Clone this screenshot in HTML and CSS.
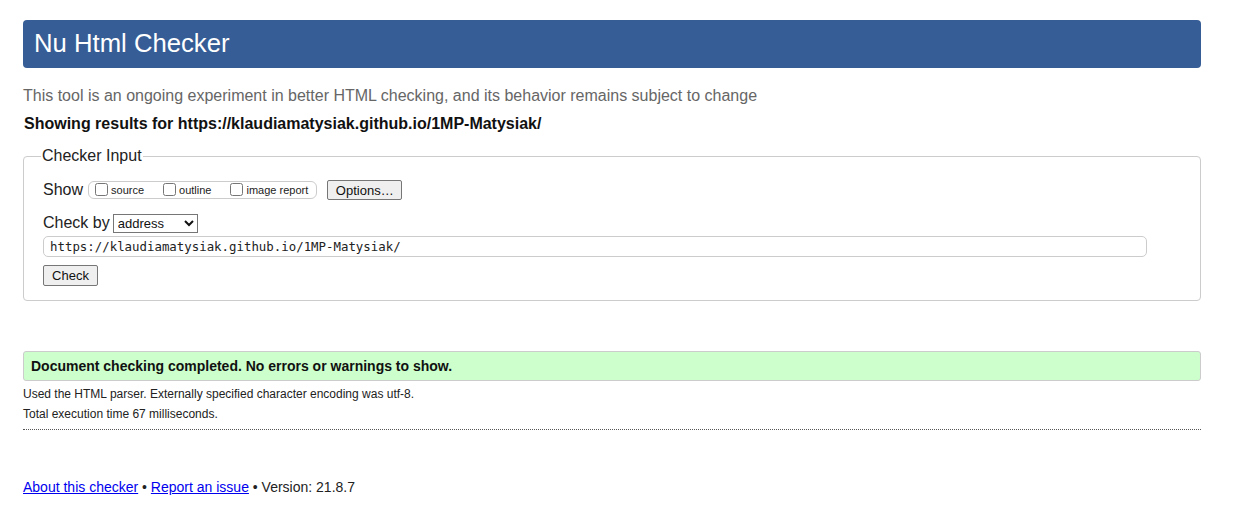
FILE: index.html
```html
<!DOCTYPE html>
<html>
<head>
<meta charset="utf-8">
<title>Nu Html Checker</title>
<link rel="stylesheet" href="styles.css">
</head>
<body>
<div class="page">
  <h1 class="title">Nu Html Checker</h1>
  <p class="intro">This tool is an ongoing experiment in better HTML checking, and its behavior remains subject to change</p>
  <p class="showing">Showing results for https://klaudiamatysiak.github.io/1MP-Matysiak/</p>
  <fieldset class="input">
    <legend>Checker Input</legend>
    <div class="row show-row">
      <span class="lbl">Show</span>
      <span class="opts">
        <label><input type="checkbox">source</label>
        <label><input type="checkbox">outline</label>
        <label><input type="checkbox">image report</label>
      </span>
      <button class="btn opt-btn" type="button">Options…</button>
    </div>
    <div class="row by-row">
      <span class="lbl">Check by</span>
      <select class="sel"><option>address</option></select>
    </div>
    <input class="url" type="text" value="https://klaudiamatysiak.github.io/1MP-Matysiak/">
    <button class="btn check-btn" type="button">Check</button>
  </fieldset>
  <p class="success">Document checking completed. No errors or warnings to show.</p>
  <p class="detail">Used the HTML parser. Externally specified character encoding was utf-8.</p>
  <p class="detail last">Total execution time 67 milliseconds.</p>
  <p class="footer"><a href="#">About this checker</a> • <a href="#">Report an issue</a> • Version: 21.8.7</p>
</div>
</body>
</html>
```
FILE: styles.css
```css
html, body { margin: 0; padding: 0; background: #fff; }
body { font-family: "Liberation Sans", Arial, sans-serif; color: #111; }
.page { width: 1178px; margin-left: 23px; padding-top: 20px; }
.title {
  margin: 0; height: 48px; box-sizing: border-box;
  background: #365d95; color: #fff; border-radius: 4px;
  font-weight: normal; font-size: 25.7px; line-height: 46px; padding-left: 11px;
}
.intro { margin: 18px 0 0; font-size: 16px; line-height: 20px; color: #666; }
.showing { margin: 8px 0 0 1px; font-size: 16px; line-height: 20px; font-weight: bold; color: #111; }
.input {
  margin: 13px 0 0; padding: 4px 0 14px 19px; border: 1px solid #ccc; border-radius: 4px;
  min-inline-size: 0;
}
.input legend { padding: 0 1px; margin-left: -2px; font-size: 16px; color: #222; }
.row { display: flex; align-items: center; }
.lbl { font-size: 16px; color: #222; }
.show-row { margin-top: 9px; height: 24px; }
.opts {
  display: flex; align-items: center; margin-left: 5px; height: 18px; box-sizing: border-box;
  border: 1px solid #ccc; border-radius: 6px; padding: 0 1px 0 6px;
}
.opts label { font-size: 11px; display: flex; align-items: flex-end; margin-right: 19px; color: #222; line-height: 13px; }
.opts label:last-child { margin-right: 7px; }
.opts input { margin: 0 3px 0 0; width: 13px; height: 13px; position: relative; top: -1px; }
.btn {
  font-family: "Liberation Sans", Arial, sans-serif; font-size: 13px; color: #111;
  background: #efefef; border: 1px solid #767676; border-radius: 2px; padding: 0 6px; height: 20px;
}
.opt-btn { margin-left: 10px; width: 75px; }
.by-row { margin-top: 11px; height: 20px; }
.sel {
  margin-left: 3px; width: 85px; height: 19px; font-size: 13px;
  font-family: "Liberation Sans", Arial, sans-serif; border: 1px solid #767676; border-radius: 0; background: #fff; color: #111;
}
.url {
  display: block; margin-top: 3px; width: 1104px; height: 21px; box-sizing: border-box;
  border: 1px solid #ccc; border-radius: 5px; padding: 0 6px;
  font-family: "DejaVu Sans Mono", "Liberation Mono", monospace; font-size: 12.4px; color: #222;
}
.check-btn { display: block; margin-top: 8px; width: 55px; height: 21px; font-size: 13px; }
.success {
  margin: 50px 0 0; height: 30px; box-sizing: border-box; border: 1px solid #ccc; border-radius: 3px;
  background: #ccffcc; font-weight: bold; font-size: 14px; line-height: 28px; padding-left: 7px; color: #111;
}
.detail { margin: 6px 0 0; font-size: 12px; line-height: 14px; color: #222; }
.detail.last { margin-top: 6px; padding-bottom: 8px; border-bottom: 1px dotted #555; }
.footer { margin: 49px 0 0; font-size: 14px; color: #222; }
.footer a { color: #0000ee; }
```
